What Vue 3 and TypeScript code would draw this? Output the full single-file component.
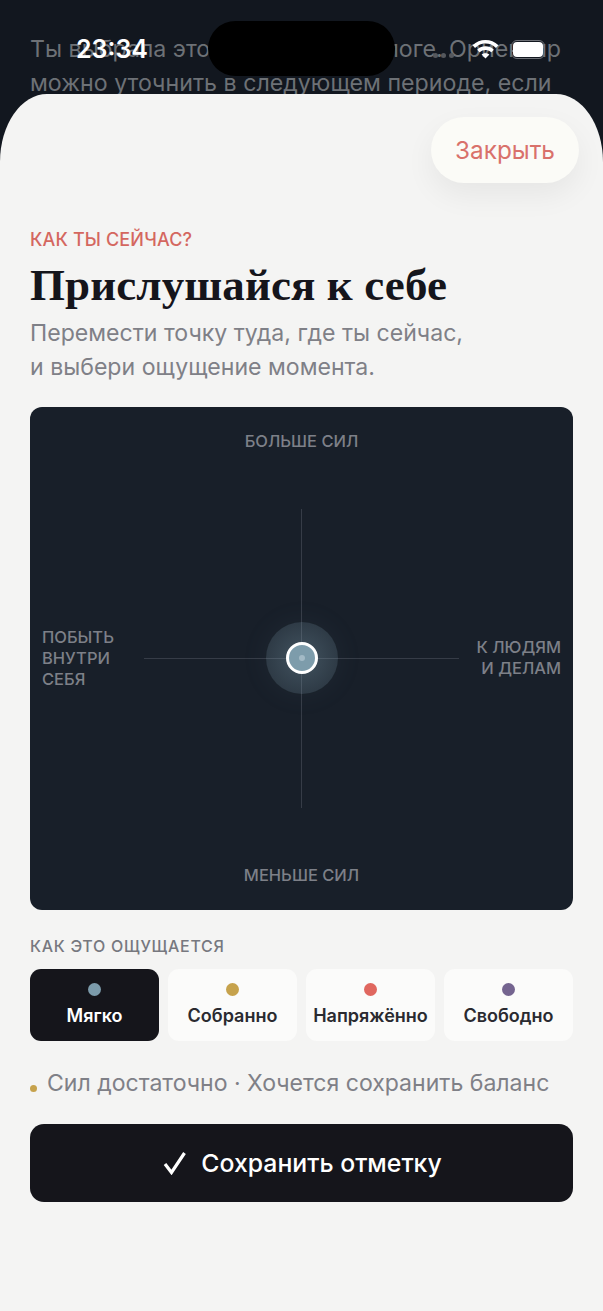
<script setup lang="ts">
interface Mood { label: string; color: string; active?: boolean }
const moods: Mood[] = [
  { label: 'Мягко', color: '#7c9bab', active: true },
  { label: 'Собранно', color: '#c6a24c' },
  { label: 'Напряжённо', color: '#e0675f' },
  { label: 'Свободно', color: '#74648f' },
]
</script>

<template>
  <div class="screen">
    <div class="status">
      <span class="time">23:34</span>
      <span class="island"></span>
      <span class="page-dots"><i></i><i></i><i></i></span>
      <span class="status-icons">
        <svg class="wifi" width="27" height="20" viewBox="0 0 27 20">
          <path d="M1.8 7.6C8.5 1.2 18.5 1.2 25.2 7.6" fill="none" stroke="#fff" stroke-width="3.6" />
          <path d="M6.4 12C10.6 8.2 16.4 8.2 20.6 12" fill="none" stroke="#fff" stroke-width="3.6" />
          <path d="M13.5 19.5L9.6 15.6C11.8 13.8 15.2 13.8 17.4 15.6Z" fill="#fff" />
        </svg>
        <span class="battery"><span class="battery-fill"></span></span>
      </span>
    </div>

    <p class="behind">Ты выбрала это решение в диалоге. Ориентир<br />можно уточнить в следующем периоде, если</p>

    <section class="sheet">
      <div class="sheet-top">
        <button class="close">Закрыть</button>
      </div>
      <div class="eyebrow">КАК ТЫ СЕЙЧАС?</div>
      <h1 class="title">Прислушайся к себе</h1>
      <p class="sub">Перемести точку туда, где ты сейчас,<br />и выбери ощущение момента.</p>

      <div class="pad">
        <span class="lbl lbl-top">БОЛЬШЕ СИЛ</span>
        <span class="lbl lbl-bottom">МЕНЬШЕ СИЛ</span>
        <span class="lbl lbl-left">ПОБЫТЬ<br />ВНУТРИ<br />СЕБЯ</span>
        <span class="lbl lbl-right">К ЛЮДЯМ<br />И ДЕЛАМ</span>
        <span class="axis axis-h"></span>
        <span class="axis axis-v"></span>
        <span class="halo"></span>
        <span class="knob"><span class="knob-core"></span></span>
      </div>

      <div class="section-label">КАК ЭТО ОЩУЩАЕТСЯ</div>
      <div class="chips">
        <button v-for="m in moods" :key="m.label" class="chip" :class="{ active: m.active }">
          <span class="chip-dot" :style="{ background: m.color }"></span>
          <span class="chip-label">{{ m.label }}</span>
        </button>
      </div>

      <div class="state">
        <span class="state-dot"></span>
        <span>Сил достаточно · Хочется сохранить баланс</span>
      </div>

      <button class="save">
        <svg width="26" height="24" viewBox="0 0 26 24">
          <path d="M4 13L10.5 21.5L23.5 2" fill="none" stroke="#fff" stroke-width="3.2" />
        </svg>
        <span>Сохранить отметку</span>
      </button>
    </section>
  </div>
</template>

<style>
html, body { margin: 0; background: #12171f; }
</style>

<style scoped>
.screen {
  position: relative;
  width: 603px;
  height: 1311px;
  overflow: hidden;
  background: #12171f;
  font-family: Inter, "Noto Sans", sans-serif;
  display: flex;
  flex-direction: column;
}
.status {
  position: absolute;
  inset: 0 0 auto 0;
  height: 96px;
  z-index: 3;
}
.time {
  position: absolute;
  left: 76px;
  top: 33px;
  color: #fff;
  font-size: 25px;
  line-height: 32px;
  font-weight: 600;
}
.island {
  position: absolute;
  left: 208px;
  top: 21px;
  width: 187px;
  height: 55px;
  border-radius: 28px;
  background: #000;
}
.page-dots {
  position: absolute;
  left: 433px;
  top: 53px;
  display: flex;
  gap: 3px;
}
.page-dots i {
  display: block;
  width: 5px;
  height: 5px;
  border-radius: 50%;
  background: #55585d;
}
.status-icons {
  position: absolute;
  left: 472px;
  top: 39px;
  display: flex;
  align-items: center;
  gap: 12px;
}
.battery {
  display: block;
  width: 34px;
  height: 19px;
  box-sizing: border-box;
  border: 1.5px solid #6d7076;
  border-radius: 6px;
  padding: 1px;
}
.battery-fill {
  display: block;
  height: 100%;
  border-radius: 4px;
  background: #fff;
}
.behind {
  margin: 32px 0 0;
  padding: 0 30px;
  height: 62px;
  color: #6d7176;
  font-size: 23.2px;
  line-height: 34px;
  overflow: hidden;
  white-space: nowrap;
}
.sheet {
  flex: 1;
  z-index: 1;
  background: #f4f4f3;
  border-radius: 47px 47px 0 0 / 68px 68px 0 0;
  padding: 23px 30px 0;
  display: flex;
  flex-direction: column;
  min-height: 0;
}
.sheet-top {
  display: flex;
  justify-content: flex-end;
  margin-right: -6px;
}
.close {
  width: 148px;
  height: 66px;
  border: 0;
  border-radius: 33px;
  background: #fbfbf7;
  color: #d9716b;
  font: 400 24.3px Inter, sans-serif;
  box-shadow: 0 12px 30px rgba(20, 20, 25, 0.06);
}
.eyebrow {
  margin-top: 46px;
  color: #d4675f;
  font-size: 18px;
  line-height: 22px;
  font-weight: 550;
  letter-spacing: 0.15px;
}
.title {
  margin: 6px 0 0;
  color: #15151b;
  font-family: "Liberation Serif", serif;
  font-size: 45px;
  line-height: 56px;
  font-weight: 700;
  letter-spacing: 0.1px;
}
.sub {
  margin: 4px 0 0;
  color: #7f8087;
  font-size: 23.1px;
  line-height: 33.5px;
}
.pad {
  position: relative;
  height: 503px;
  margin-top: 23px;
  border-radius: 12px;
  background: #181f29;
  flex: none;
}
.lbl {
  position: absolute;
  color: #7d8088;
  font-size: 16.5px;
  line-height: 21px;
  font-weight: 500;
  letter-spacing: 0;
}
.lbl-top { top: 24px; left: 0; right: 0; text-align: center; }
.lbl-bottom { bottom: 24px; left: 0; right: 0; text-align: center; }
.lbl-left { left: 12px; top: 220px; }
.lbl-right { right: 12px; top: 230px; text-align: right; }
.axis { position: absolute; background: #363c47; }
.axis-h { left: 114px; width: 315px; top: 251px; height: 1px; }
.axis-v { left: 271px; width: 1px; top: 102px; height: 299px; }
.halo {
  position: absolute;
  left: 235.5px;
  top: 215px;
  width: 72px;
  height: 72px;
  border-radius: 50%;
  background: radial-gradient(circle, rgba(124, 155, 171, 0.42), rgba(124, 155, 171, 0.14));
  box-shadow: 0 0 30px rgba(124, 155, 171, 0.07);
}
.knob {
  position: absolute;
  left: 255.5px;
  top: 235px;
  width: 32px;
  height: 32px;
  box-sizing: border-box;
  border: 3px solid #fff;
  border-radius: 50%;
  background: #7d9cab;
  display: flex;
  align-items: center;
  justify-content: center;
}
.knob-core {
  width: 6px;
  height: 6px;
  border-radius: 50%;
  background: #a3bac6;
}
.section-label {
  margin-top: 26px;
  color: #77787f;
  font-size: 16px;
  line-height: 20px;
  font-weight: 450;
  letter-spacing: 0.7px;
}
.chips {
  display: grid;
  grid-template-columns: repeat(4, 1fr);
  gap: 9px;
  margin-top: 13px;
}
.chip {
  height: 72px;
  border: 0;
  padding: 14px 0 0;
  border-radius: 11px;
  background: #fbfbfa;
  color: #2a2a30;
  font-family: inherit;
  display: flex;
  flex-direction: column;
  align-items: center;
  gap: 8px;
}
.chip.active { background: #15151b; color: #fff; }
.chip-dot {
  width: 13px;
  height: 13px;
  border-radius: 50%;
}
.chip-label {
  font-size: 18px;
  line-height: 24px;
  font-weight: 600;
}
.state {
  margin-top: 27px;
  display: flex;
  align-items: center;
  gap: 10px;
  color: #7f8087;
  font-size: 23.05px;
  line-height: 30px;
}
.state-dot {
  width: 7px;
  height: 7px;
  border-radius: 50%;
  background: #c6a24c;
  margin-top: 10px;
}
.save {
  margin-top: 26px;
  height: 78px;
  border: 0;
  border-radius: 14px;
  background: #15151b;
  color: #fff;
  font: 500 24.8px Inter, sans-serif;
  display: flex;
  align-items: center;
  justify-content: center;
  gap: 14px;
}
</style>
